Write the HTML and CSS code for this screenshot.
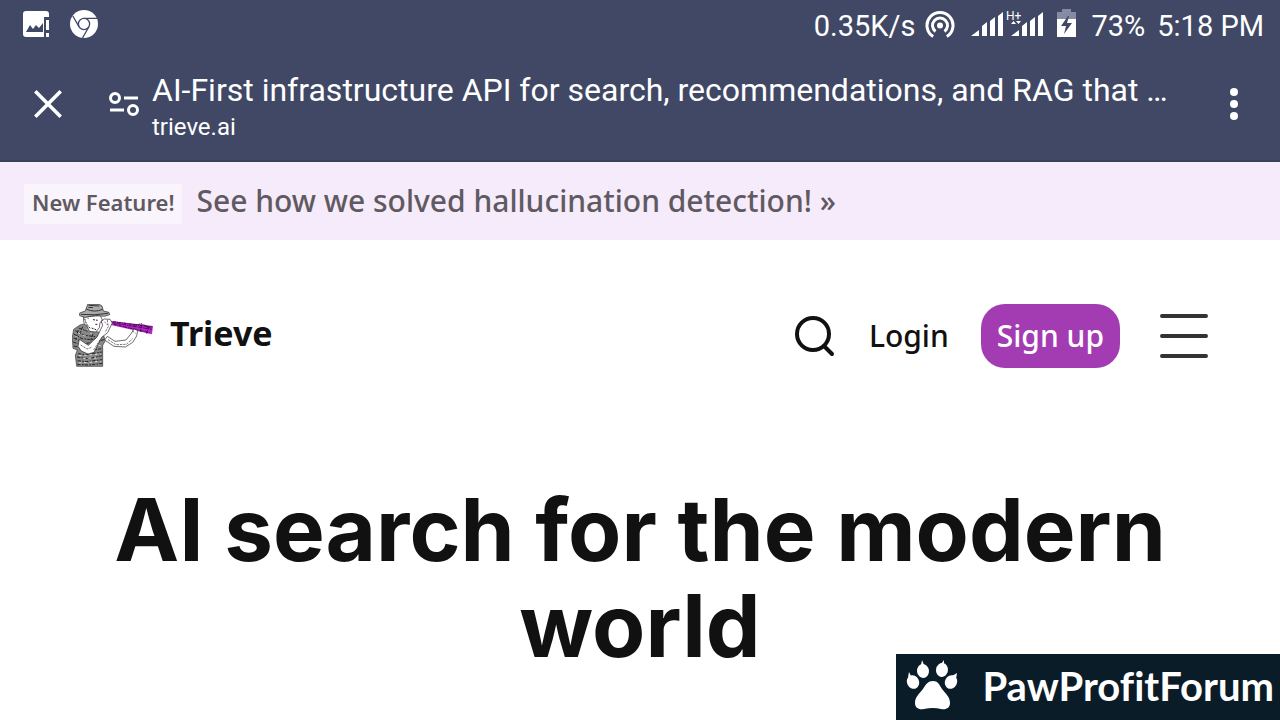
FILE: index.html
```html
<!DOCTYPE html>
<html lang="en">
<head>
  <meta charset="utf-8">
  <meta name="viewport" content="width=device-width, initial-scale=1">
  <title>AI-First infrastructure API for search, recommendations, and RAG</title>
  <link rel="stylesheet" href="styles.css">
</head>
<body>

  <div class="status-bar">
    <div class="notifications">
      <svg width="28" height="28" viewBox="0 0 28 28" aria-hidden="true">
        <path fill="#fff" fill-rule="evenodd" d="M4 1h20q3 0 3 3v3h-5v20H4q-3 0-3-3V4q0-3 3-3zM4 22h17v-9l-4 5-3-3-3 4-3-4z"/>
        <path fill="#fff" d="M24 10h3v10h-3zM24 23h3v4h-3z"/>
      </svg>
      <svg width="28" height="28" viewBox="0 0 28 28" aria-hidden="true">
        <circle cx="14" cy="14" r="14" fill="#fff"/>
        <g fill="none" stroke="#404865" stroke-width="1.3">
          <circle cx="14" cy="14" r="5.6"/>
          <path d="M14 8.4H27M9.1 16.8 2.8 6M18.9 16.8 12.5 28"/>
        </g>
      </svg>
    </div>
    <div class="indicators">
      <span>0.35K/s</span>
      <svg class="hotspot" width="30" height="30" viewBox="0 0 30 30" aria-hidden="true">
        <g fill="none" stroke="#fff" stroke-width="3">
          <path d="M8.2 27.5a13 13 0 1 1 13.6 0"/>
          <path d="M10.500 22.500a7.500 7.500 0 1 1 9 0"/>
        </g>
        <circle cx="15" cy="16.500" r="3" fill="#fff"/>
      </svg>
      <svg class="signal" width="74" height="32" viewBox="0 0 74 32">
        <g fill="#fff">
          <path d="M0 28 8 22V28zM11 28V18l5-4v14zM19 28V13l5-4v19zM27 28V8l5-4v24z"/>
          <path d="M40 28 48 22V28zM51 28V18l5-4v14zM59 28V13l5-4v19zM67 28V8l5-4v24z"/>
          <path d="m40 16 2.5-3 2.5 3zM45 13h5l-2.5 3z"/>
          <text class="network" x="35" y="12">H+</text>
        </g>
      </svg>
      <svg class="battery" width="20" height="30" viewBox="0 0 20 30" aria-hidden="true">
        <path fill="#858ba0" d="M5 0h9v3h5v8H0V3h5z"/>
        <path fill="#fff" d="M0 10h19v18H0z"/>
        <path fill="#404865" d="m11 7-7 10h5l-2 8 8-11h-5l2-7z"/>
      </svg>
      <span class="charge">73%</span>
      <span>5:18 PM</span>
    </div>
  </div>

  <header class="toolbar">
    <button class="icon-button close" aria-label="Close tab">
      <svg width="28" height="28" viewBox="0 0 28 28"><path fill="none" stroke="#fff" stroke-width="3.6" d="M1.3 1.3 26.7 26.7M26.7 1.3 1.3 26.7"/></svg>
    </button>
    <button class="icon-button" aria-label="Site settings">
      <svg width="32" height="28" viewBox="0 0 32 28">
        <g fill="none" stroke="#fff" stroke-width="3">
          <circle cx="7" cy="8" r="4.5"/>
          <circle cx="25" cy="20" r="4.5"/>
          <path d="M16 8h14M2 20h14"/>
        </g>
      </svg>
    </button>
    <div class="page-info">
      <div class="page-title">AI-First infrastructure API for search, recommendations, and RAG that …</div>
      <div class="page-host">trieve.ai</div>
    </div>
    <button class="icon-button" aria-label="More options">
      <svg width="8" height="32" viewBox="0 0 8 32" fill="#fff"><circle cx="4" cy="4" r="4"/><circle cx="4" cy="16" r="4"/><circle cx="4" cy="28" r="4"/></svg>
    </button>
  </header>

  <a class="banner" href="#">
    <span class="tag">New Feature!</span>
    <span class="news">See how we solved hallucination detection! »</span>
  </a>

  <nav class="nav">
    <a class="brand" href="#">
      <svg width="82" height="64" viewBox="12 16 246 192" aria-hidden="true">
        <!-- shirt -->
        <path fill="#888" stroke="#333" stroke-width="2" d="M36 79 17 92 13 116 15 149 28 154 22 170 26 203H104V140L112 126 104 102 84 99 63 84 54 75z"/>
        <path fill="none" stroke="#222" stroke-width="3" stroke-dasharray="10 4 5 3" d="M32 88 58 98M22 96 50 110 82 114M17 106 42 120 70 123 100 114M17 118 36 126M16 130 34 137M18 142 32 146M55 134 86 129 108 123M60 145 88 139M68 155 101 150M30 165 52 168 102 160M27 175 62 180 102 171M29 186 54 189 102 183M28 197 63 199 103 194M44 84 36 104M31 94 24 122M75 105 68 128M90 109 82 138"/>
        <path fill="none" stroke="#ddd" stroke-width="3" stroke-dasharray="7 9" d="M30 102 59 116M23 112 41 131M58 90 71 107M76 134 99 142M33 171 99 166M33 193 99 188M46 179 90 178"/>
        <!-- face and hat -->
        <path fill="#fff" stroke="#222" stroke-width="2" d="M46 55 48 75 57 82 64 98 83 100 94 87 96 72 104 65 97 51z"/>
        <path fill="none" stroke="#222" stroke-width="3" stroke-dasharray="6 3" d="M50 60 55 75 68 91M75 63 89 65M82 77 91 77M71 88 84 93M53 51 61 60"/>
        <path fill="#aaa" stroke="#222" stroke-width="2" d="M52 37 59 17 68 17 94 17 102 22 106 37 123 41 125 48 109 53 82 50 52 56 35 51 35 43z"/>
        <path fill="none" stroke="#333" stroke-width="3" d="M55 31Q78 43 104 32M39 47Q78 51 120 44M62 20 94 22M61 26 75 27"/>
        <!-- spyglass -->
        <path fill="#b922d0" d="m100 63 155 19-3 25L99 72z"/>
        <path fill="none" stroke="#34103c" stroke-width="3" stroke-dasharray="8 3 3 2" d="m103 67 148 25M138 77 244 102M136 69 251 85M220 81l-3 18M241 83l-5 22"/>
        <!-- arms -->
        <path fill="#fff" stroke="#222" stroke-width="2" d="m34 122-4 21 10 14 20 9 18-5 23-45 18-14 8-17 6-12-7-11-17-1-9 7 4 12-17 35-26 25z"/>
        <path fill="#fff" stroke="#222" stroke-width="2" d="m110 124 28 19 34 2 22-14 12-19 3-17-11-4-8 13-16 20-33 4-23-15z"/>
        <path fill="none" stroke="#333" stroke-width="2" stroke-dasharray="7 3" d="M38 139 57 151 70 146M109 69 122 82 112 99M118 64 120 79M120 123 144 138 175 137 194 120M193 96 203 104M197 88 208 95M96 123 77 154"/>
        <path fill="none" stroke="#34103c" stroke-width="4" stroke-dasharray="3 2" d="M194 80 220 76 247 88"/>
      </svg>
      <span>Trieve</span>
    </a>
    <div class="nav-actions">
      <button class="icon-button search" aria-label="Search">
        <svg width="42" height="42" viewBox="0 0 42 42"><g fill="none" stroke="#111" stroke-width="4" stroke-linecap="round"><circle cx="20" cy="19" r="16"/><path d="m31 31 8 8"/></g></svg>
      </button>
      <a class="login" href="#">Login</a>
      <a class="signup" href="#">Sign up</a>
      <button class="icon-button menu" aria-label="Menu">
        <svg width="48" height="44" viewBox="0 0 48 44"><path stroke="#333" stroke-width="4" stroke-linecap="round" d="M2 2h44M2 22h44M2 42h44"/></svg>
      </button>
    </div>
  </nav>

  <main class="hero">
    <h1>AI search for the modern world</h1>
  </main>

  <div class="watermark">
    <svg width="52" height="52" viewBox="0 0 52 52" fill="#fff" aria-hidden="true">
      <path d="M27 21c-5 0-7 3-10 8-4 5-8 8-8 14 0 5 4 7 9 6q9-2 17 0c5 1 9-1 9-6 0-6-4-9-8-14-3-5-4-8-9-8z"/>
      <ellipse cx="17" cy="11" rx="6" ry="7" transform="rotate(-6 17 11)"/>
      <ellipse cx="36" cy="10" rx="6" ry="7" transform="rotate(8 36 10)"/>
      <ellipse cx="7" cy="22" rx="6" ry="7" transform="rotate(-24 7 22)"/>
      <ellipse cx="45" cy="22" rx="6" ry="7" transform="rotate(24 45 22)"/>
      <path d="m15 5 1-5 2 5zM35 4l3-4v5zM2 17l1-5 2 4zM46 16l5-3-1 6z"/>
    </svg>
    <span>PawProfitForum</span>
  </div>

</body>
</html>
```
FILE: styles.css
```css
*, *::before, *::after { box-sizing: border-box }

body {
  font: 500 30px/40px "Noto Sans", sans-serif;
  margin: 0;
  background: #fff;
  color: #111;
}

a {
  color: inherit;
  text-decoration: none;
}

svg {
  display: block;
  flex: none;
}

.icon-button {
  flex: none;
  padding: 0;
  border: none;
  background: none;
  cursor: pointer;
}


/*///////////// Phone bars */

.status-bar,
.toolbar {
  display: flex;
  align-items: center;
  background: #404865;
  color: #fff;
  font-family: Roboto, sans-serif;
  font-weight: 400;
}

.status-bar {
  justify-content: space-between;
  height: 48px;
  padding: 0 16px 0 22px;
  font-size: 29px;
}

.notifications,
.indicators {
  display: flex;
  align-items: center;
}

.notifications {
  gap: 20px;
}

.indicators span {
  padding-top: 3px;
}

.hotspot {
  margin: 0 16px 0 10px;
}

.network {
  font-size: 12px;
}

.battery {
  margin: 0 14px 0 12px;
}

.charge {
  margin-right: 12px;
}

.toolbar {
  height: 114px;
  padding: 0 42px 0 34px;
  border-bottom: 2px solid #3a415b;
}

.close {
  margin-right: 46px;
}

.page-info {
  flex: 1;
  min-width: 0;
  margin: 0 32px 0 12px;
  padding-top: 6px;
}

.page-title {
  font-size: 32px;
  line-height: 40px;
  overflow: hidden;
  text-overflow: ellipsis;
  white-space: nowrap;
}

.page-host {
  font-size: 24px;
  line-height: 34px;
}


/*///////////// Site */

.banner {
  display: flex;
  align-items: flex-start;
  gap: 14px;
  padding: 22px 24px 16px;
  background: #f6ebfa;
  color: #5f5a61;
}

.tag {
  padding: 0 8px 4px;
  background: #faf5fc;
  font-size: 22px;
  font-weight: 600;
  line-height: 36px;
}

.news {
  line-height: 34px;
}

.nav {
  display: flex;
  justify-content: space-between;
  padding: 64px 72px 0;
}

.brand,
.nav-actions {
  display: flex;
  align-items: center;
}

.brand {
  align-items: flex-start;
  gap: 16px;
  font-size: 34px;
  font-weight: 700;
  line-height: 58px;
}

.search {
  margin-right: 34px;
}

.login {
  margin-right: 32px;
}

.signup {
  padding: 12px 16px;
  border-radius: 24px;
  background: #a33cb3;
  color: #fff;
}

.menu {
  margin-left: 40px;
}

.hero {
  padding: 114px 64px 0;
  text-align: center;
}

h1 {
  margin: 0;
  font: 700 87px/96px Inter, sans-serif;
}


/*///////////// Watermark over the corner */

.watermark {
  position: fixed;
  right: 0;
  bottom: 0;
  display: flex;
  align-items: center;
  gap: 24px;
  padding: 6px 6px 8px 10px;
  background: #0b1c29;
  color: #fff;
  font: 700 40px/52px Lato, sans-serif;
  font-variant-ligatures: none;
}
```
